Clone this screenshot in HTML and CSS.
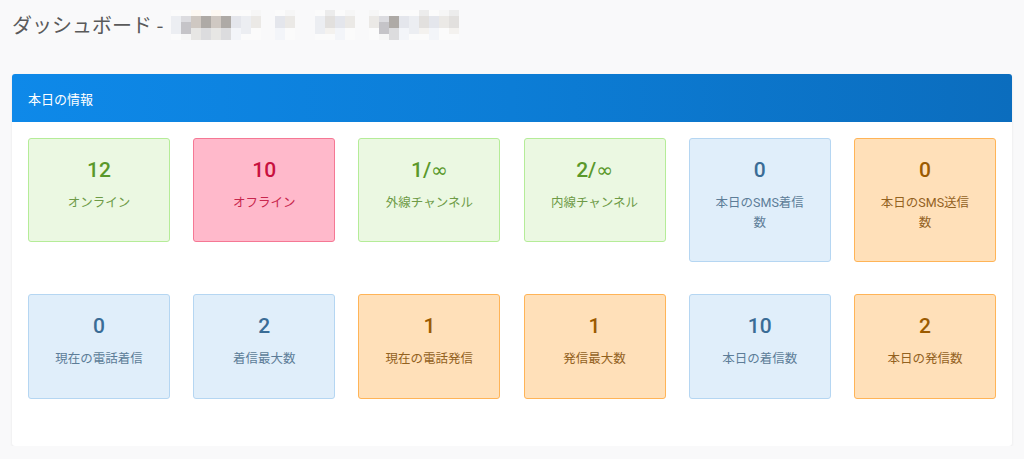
FILE: index.html
```html
<!DOCTYPE html>
<html lang="ja">
<head>
<meta charset="utf-8">
<title>ダッシュボード</title>
<link rel="stylesheet" href="styles.css">
</head>
<body>
<div class="page">
  <h1 class="title">ダッシュボード -<span class="blur"><i class="a"></i><i class="b"></i><i class="c"></i><i class="d"></i><i class="c"></i><i class="d"></i><i class="e"></i><i class="a"></i><i class="f"></i><i class="sp"></i><i class="e"></i><i class="f"></i><i class="sp2"></i><i class="a"></i><i class="g"></i><i class="e"></i><i class="f"></i><i class="sp"></i><i class="f"></i><i class="b"></i><i class="d"></i><i class="e"></i><i class="a"></i><i class="g"></i><i class="e"></i><i class="f"></i><i class="g"></i></span></h1>
  <section class="card">
    <header class="card-head">本日の情報</header>
    <div class="card-body">
      <div class="tile green"><div class="num">12</div><div class="lbl">オンライン</div></div>
      <div class="tile pink"><div class="num">10</div><div class="lbl">オフライン</div></div>
      <div class="tile green"><div class="num">1/<span class="inf">∞</span></div><div class="lbl">外線チャンネル</div></div>
      <div class="tile green"><div class="num">2/<span class="inf">∞</span></div><div class="lbl">内線チャンネル</div></div>
      <div class="tile blue"><div class="num">0</div><div class="lbl">本日のSMS着信<br>数</div></div>
      <div class="tile orange"><div class="num">0</div><div class="lbl">本日のSMS送信<br>数</div></div>
      <div class="tile blue"><div class="num">0</div><div class="lbl">現在の電話着信</div></div>
      <div class="tile blue"><div class="num">2</div><div class="lbl">着信最大数</div></div>
      <div class="tile orange"><div class="num">1</div><div class="lbl">現在の電話発信</div></div>
      <div class="tile orange"><div class="num">1</div><div class="lbl">発信最大数</div></div>
      <div class="tile blue"><div class="num">10</div><div class="lbl">本日の着信数</div></div>
      <div class="tile orange"><div class="num">2</div><div class="lbl">本日の発信数</div></div>
    </div>
  </section>
</div>
</body>
</html>
```
FILE: styles.css
```css
* { box-sizing: border-box; }
html, body { margin: 0; padding: 0; }
body {
  background: #f9f9fa;
  font-family: Roboto, "Noto Sans CJK JP", sans-serif;
  color: #555;
}
.page { padding: 10px 12px 0 12px; }
.title {
  margin: 0;
  font-family: "Noto Sans CJK JP", sans-serif;
  font-weight: 400;
  font-size: 20px;
  line-height: 30px;
  color: #5a5a5a;
  display: flex;
  align-items: center;
  height: 30px;
}
.blur { display: inline-flex; align-items: center; margin-left: 8px; height: 30px; }
.blur i { display: inline-block; width: 10px; height: 30px; }
.blur .sp { width: 14px; }
.blur .sp2 { width: 20px; }
.blur .a { background: linear-gradient(#fbfbfb 0 20%, #eceef2 20% 80%, #fbfbfb 80%); }
.blur .b { background: linear-gradient(#fbfbfb 0 20%, #dcdce0 20% 40%, #c5c4c8 40% 80%, #f6f6f6 80%); }
.blur .c { background: linear-gradient(#fdf8f2 0 20%, #cfc8c2 20% 60%, #e7e6e4 60% 100%); }
.blur .d { background: linear-gradient(#fbfbfb 0 20%, #aeaaa6 20% 60%, #dcdcde 60% 100%); }
.blur .e { background: linear-gradient(#fbfbfb 0 20%, #e4e6ec 20% 60%, #f3f5f9 60% 100%); }
.blur .f { background: linear-gradient(#f6f6f6 0 20%, #ebe9e6 20% 60%, #fbfbfb 60% 100%); }
.blur .g { background: linear-gradient(#ececec 0 20%, #e2e0de 20% 60%, #f4f2ef 60% 80%, #fbfbfb 80%); }

.card {
  margin-top: 34px;
  width: 1000px;
  background: #fff;
  border-radius: 3px;
  box-shadow: 0 1px 3px rgba(0,0,0,0.08);
  overflow: hidden;
}
.card-head {
  height: 48px;
  padding: 0 16px;
  display: flex;
  align-items: center;
  background: linear-gradient(90deg, #0e89e9 0%, #0c7dd6 50%, #0b6dbe 100%);
  color: #fff;
  font-family: "Noto Sans CJK JP", sans-serif;
  font-size: 13px;
}
.card-body {
  padding: 16px;
  display: grid;
  grid-template-columns: repeat(6, 142px);
  column-gap: 23.2px;
  row-gap: 32px;
  align-items: start;
}
.tile {
  border: 1px solid;
  border-radius: 3px;
  min-height: 104px;
  padding: 19px 8px 28px 8px;
  text-align: center;
}
.tile:nth-child(n+7) { margin-bottom: 31px; min-height: 105px; }
.num {
  font-family: Roboto, sans-serif;
  font-weight: 500;
  font-size: 21px;
  line-height: 24px;
}
.inf {
  font-family: "DejaVu Sans", sans-serif;
  font-weight: 400;
  font-size: 20px;
}
.lbl {
  margin-top: 11px;
  font-family: Roboto, "Noto Sans CJK JP", sans-serif;
  font-size: 12.5px;
  line-height: 20px;
}
.green { background: #ebf8e2; border-color: #b5ec98; }
.green .num { color: #5a982b; }
.green .lbl { color: #6e9b47; }
.pink { background: #ffb9cb; border-color: #f57894; }
.pink .num { color: #c8113f; }
.pink .lbl { color: #c8264d; }
.blue { background: #e0eefa; border-color: #b5d6f2; }
.blue .num { color: #3a6c96; }
.blue .lbl { color: #5d7d98; }
.orange { background: #ffe0b9; border-color: #ffb457; }
.orange .num { color: #9b5a00; }
.orange .lbl { color: #93621f; }
```
